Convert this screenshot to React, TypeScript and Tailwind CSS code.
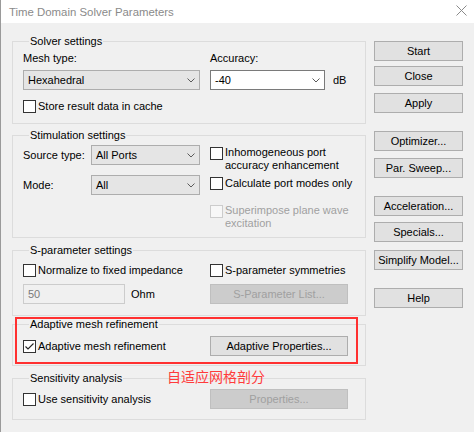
import { ReactNode } from "react";

const Chevron = () => (
  <svg width="8" height="5" viewBox="0 0 8 5" className="shrink-0">
    <path d="M0.5 0.5 L4 4 L7.5 0.5" fill="none" stroke="#5a5a5a" strokeWidth="1" />
  </svg>
);

interface SelectProps {
  value: string;
  white?: boolean;
  className?: string;
}
const Select = ({ value, white, className = "" }: SelectProps) => {
  return (
    <div
      className={`flex h-[20px] items-center justify-between pl-[4px] pr-[4px] border ${
        white ? "bg-white border-[#7a7a7a]" : "bg-[#e5e5e5] border-[#adadad]"
      } ${className}`}
    >
      <span className="leading-[14px]">{value}</span>
      <Chevron />
    </div>
  );
};

interface CheckProps {
  label: ReactNode;
  checked?: boolean;
  disabled?: boolean;
  multi?: boolean;
  className?: string;
}
const Check = ({ label, checked, disabled, multi, className = "" }: CheckProps) => {
  return (
    <div className={`flex items-start gap-[2px] ${className}`}>
      <span
        className={`w-[13px] h-[13px] border shrink-0 flex items-center justify-center ${
          multi ? "mt-[1px]" : "mt-[0.5px]"
        } ${disabled ? "border-[#cccccc] bg-[#f7f7f7]" : "border-[#333333] bg-white"}`}
      >
        {checked && (
          <svg width="11" height="11" viewBox="0 0 11 11">
            <path d="M1.5 5.5 L4 8 L9.5 2.5" fill="none" stroke="#222" strokeWidth="1.1" />
          </svg>
        )}
      </span>
      <span
        className={`${multi ? "leading-[13px]" : "leading-[14px]"} ${
          disabled ? "text-[#a0a0a0]" : ""
        }`}
      >
        {label}
      </span>
    </div>
  );
};

const Button = ({ label, disabled, className = "" }: { label: string; disabled?: boolean; className?: string }) => (
  <div
    className={`h-[20px] flex items-center justify-center border leading-[14px] ${
      disabled ? "bg-[#cccccc] border-[#bfbfbf] text-[#a0a0a0]" : "bg-[#e1e1e1] border-[#adadad]"
    } ${className}`}
  >
    {label}
  </div>
);

const Group = ({ title, className = "", children }: { title: string; className?: string; children: ReactNode }) => (
  <fieldset className={`border border-[#dcdcdc] px-[10px] ${className}`}>
    <legend className="ml-[6px] px-[1px] leading-[14px]">{title}</legend>
    {children}
  </fieldset>
);

export default function App() {
  return (
    <div className="w-[474px] h-[432px] overflow-hidden bg-[#f0f0f0] border-l border-[#9a9a9a] text-[11px] text-black font-['Liberation_Sans',Arial,sans-serif] flex flex-col">
      <div className="h-[23px] shrink-0 bg-white flex items-center justify-between pl-[8px] pr-[7px]">
        <span className="text-[11.4px] text-[#8a8a8a] leading-[16px]">Time Domain Solver Parameters</span>
        <svg width="11" height="11" viewBox="0 0 11 11" className="mb-[3px]">
          <path d="M0.5 0.5 L10.5 10.5 M10.5 0.5 L0.5 10.5" stroke="#8a8a8a" strokeWidth="1" />
        </svg>
      </div>

      <div className="flex pl-[11px] pt-[11px]">
        <div className="w-[354px] flex flex-col">
          <Group title="Solver settings" className="h-[90px]">
            <div className="flex pt-[3px]">
              <div className="w-[177px] flex flex-col gap-[5px]">
                <div className="leading-[14px]">Mesh type:</div>
                <Select value="Hexahedral" />
              </div>
              <div className="ml-[10px] flex flex-col gap-[5px]">
                <div className="leading-[14px]">Accuracy:</div>
                <div className="flex items-center gap-[8px]">
                  <Select value="-40" white className="w-[115px]" />
                  <span className="leading-[14px]">dB</span>
                </div>
              </div>
            </div>
            <Check className="mt-[9px]" label="Store result data in cache" />
          </Group>

          <Group title="Stimulation settings" className="h-[110px] mt-[4px]">
            <div className="flex">
              <div className="w-[177px] flex flex-col pt-[3px] gap-[10px]">
                <div className="flex items-center">
                  <span className="w-[68px] leading-[14px]">Source type:</span>
                  <Select value="All Ports" className="w-[109px]" />
                </div>
                <div className="flex items-center">
                  <span className="w-[68px] leading-[14px]">Mode:</span>
                  <Select value="All" className="w-[109px]" />
                </div>
              </div>
              <div className="ml-[10px] flex flex-col pt-[4px]">
                <Check
                  multi
                  label={
                    <>
                      Inhomogeneous port
                      <br />
                      accuracy enhancement
                    </>
                  }
                />
                <Check className="mt-[4px]" label="Calculate port modes only" />
                <Check
                  multi
                  disabled
                  className="mt-[14px]"
                  label={
                    <>
                      Superimpose plane wave
                      <br />
                      excitation
                    </>
                  }
                />
              </div>
            </div>
          </Group>

          <Group title="S-parameter settings" className="h-[73px] mt-[5px]">
            <div className="flex pt-[6px]">
              <div className="w-[177px]">
                <Check label="Normalize to fixed impedance" />
              </div>
              <div className="ml-[10px]">
                <Check label="S-parameter symmetries" />
              </div>
            </div>
            <div className="flex mt-[6px]">
              <div className="w-[177px] flex items-center">
                <div className="w-[102px] h-[20px] border border-[#cccccc] bg-[#f0f0f0] flex items-center pl-[4px] text-[#7a7a7a] leading-[14px]">
                  50
                </div>
                <span className="ml-[6px] leading-[14px]">Ohm</span>
              </div>
              <Button disabled label="S-Parameter List..." className="ml-[10px] w-[138px] mt-[1px]" />
            </div>
          </Group>

          <div className="relative mt-[1px]">
            <Group title="Adaptive mesh refinement" className="h-[49px]">
              <div className="flex items-center pt-[5px]">
                <div className="w-[177px]">
                  <Check checked label="Adaptive mesh refinement" />
                </div>
                <Button label="Adaptive Properties..." className="ml-[10px] w-[138px]" />
              </div>
            </Group>
            <div className="absolute left-[3px] top-0 w-[343px] h-[47px] border-2 border-[#ff3030]" />
            <div className="absolute left-[155px] top-[51px] text-[14px] leading-[16px] text-[#ff3b3b] font-['Noto_Sans_CJK_SC',sans-serif] z-10">
              自适应网格剖分
            </div>
          </div>

          <Group title="Sensitivity analysis" className="h-[49px] mt-[5px]">
            <div className="flex items-center pt-[4px]">
              <div className="w-[177px]">
                <Check label="Use sensitivity analysis" />
              </div>
              <Button disabled label="Properties..." className="ml-[10px] w-[138px]" />
            </div>
          </Group>
        </div>

        <div className="ml-[8px] w-[89px] flex flex-col pt-[7px]">
          <Button label="Start" />
          <Button label="Close" className="mt-[5px]" />
          <Button label="Apply" className="mt-[7px]" />
          <Button label="Optimizer..." className="mt-[18px]" />
          <Button label="Par. Sweep..." className="mt-[7px]" />
          <Button label="Acceleration..." className="mt-[18px]" />
          <Button label="Specials..." className="mt-[6px]" />
          <Button label="Simplify Model..." className="mt-[8px]" />
          <Button label="Help" className="mt-[18px]" />
        </div>
      </div>
    </div>
  );
}
